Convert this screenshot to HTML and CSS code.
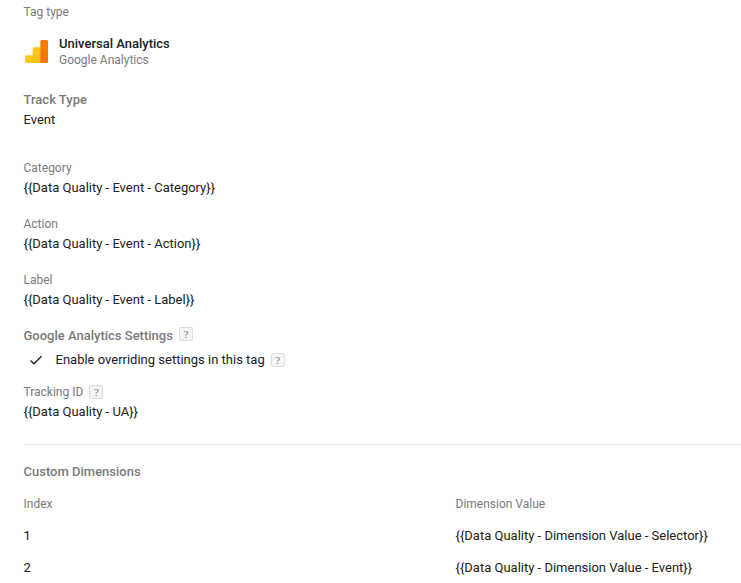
FILE: index.html
```html
<!DOCTYPE html>
<html lang="en">
<head>
<meta charset="utf-8">
<title>Tag configuration</title>
<link rel="stylesheet" href="styles.css">
</head>
<body>
<main class="panel">
  <div class="label tag-label">Tag type</div>
  <div class="tag">
    <svg class="logo" viewBox="0 0 24 24"><path fill="#ffc517" d="M8 9q0-1.500 1.500-1.500H16V24H1.500Q0 24 0 22.500v-5Q0 16 1.500 16H8z"/><path fill="#ffb916" d="M8 16h8v8H8z" opacity=".4"/><path fill="#f57c00" d="M16 1.500Q16 0 17.500 0h5Q24 0 24 1.500v21q0 1.500-1.500 1.500H16z"/><path fill="#e8710a" d="M16 9l8 8v5.500q0 1.500-1.500 1.500H16z" opacity=".4"/></svg>
    <div><div class="tag-name">Universal Analytics</div><div class="tag-vendor">Google Analytics</div></div>
  </div>
  <section class="field track"><h2 class="label strong">Track Type</h2><div class="value">Event</div></section>
  <section class="field category"><div class="label">Category</div><div class="value">{{Data Quality - Event - Category}}</div></section>
  <section class="field"><div class="label">Action</div><div class="value">{{Data Quality - Event - Action}}</div></section>
  <section class="field"><div class="label">Label</div><div class="value">{{Data Quality - Event - Label}}</div></section>
  <h2 class="label strong settings">Google Analytics Settings<span class="help">?</span></h2>
  <div class="override"><svg class="check" viewBox="0 0 14 12"><path d="M1.500 6.500l3.500 3.300L12.500 2.300" fill="none" stroke="#212121" stroke-width="1.4"/></svg><span class="value">Enable overriding settings in this tag</span><span class="help">?</span></div>
  <section class="field tracking"><div class="label">Tracking ID<span class="help">?</span></div><div class="value">{{Data Quality - UA}}</div></section>
  <section class="dimensions">
    <h2 class="label strong">Custom Dimensions</h2>
    <div class="row head label"><span>Index</span><span>Dimension Value</span></div>
    <div class="row value"><span>1</span><span>{{Data Quality - Dimension Value - Selector}}</span></div>
    <div class="row value"><span>2</span><span>{{Data Quality - Dimension Value - Event}}</span></div>
  </section>
</main>
</body>
</html>
```
FILE: styles.css
```css
* { box-sizing: border-box; }
body { margin: 0; background: #fff; font-family: Roboto, "Liberation Sans", sans-serif; overflow: hidden; }
.panel { padding: 4px 0 0 23.5px; }
.label { margin: 0; height: 16px; font-size: 12px; line-height: 16px; font-weight: 400; color: #7a7a7a; display: flex; align-items: center; }
.strong { font-size: 13px; font-weight: 500; }
.value { font-size: 13px; line-height: 20px; color: #212121; }
.tag { display: flex; align-items: center; height: 32px; margin-top: 16px; }
.logo { width: 23px; height: 23px; margin: -1px 11px 0 1.5px; }
.tag-name { font-size: 13px; line-height: 16px; font-weight: 500; color: #212121; }
.tag-vendor { font-size: 12px; line-height: 16px; color: #7a7a7a; }
.field { height: 56px; }
.field .value { margin-top: 2px; }
.track { margin-top: 24px; height: 68px; }
.settings { height: 16px; }
.help { width: 14px; height: 14px; margin-left: 6px; border: 1px solid #ddd; border-radius: 2px; background: #f5f5f5; color: #757575; font: 11px/13px "Liberation Serif", serif; text-align: center; }
.settings .help { align-self: flex-start; margin-top: -1px; }
.override { display: flex; align-items: center; height: 24px; margin-top: 4px; }
.check { width: 14px; height: 12px; margin: 0 12.5px 0 5.5px; }
.tracking { margin-top: 12px; height: 60px; }
.dimensions { border-top: 1px solid #e8e8e8; padding-top: 19px; }
.row { display: grid; grid-template-columns: 432px 1fr; height: 32px; align-items: center; }
.head { margin-top: 8px; }
```
